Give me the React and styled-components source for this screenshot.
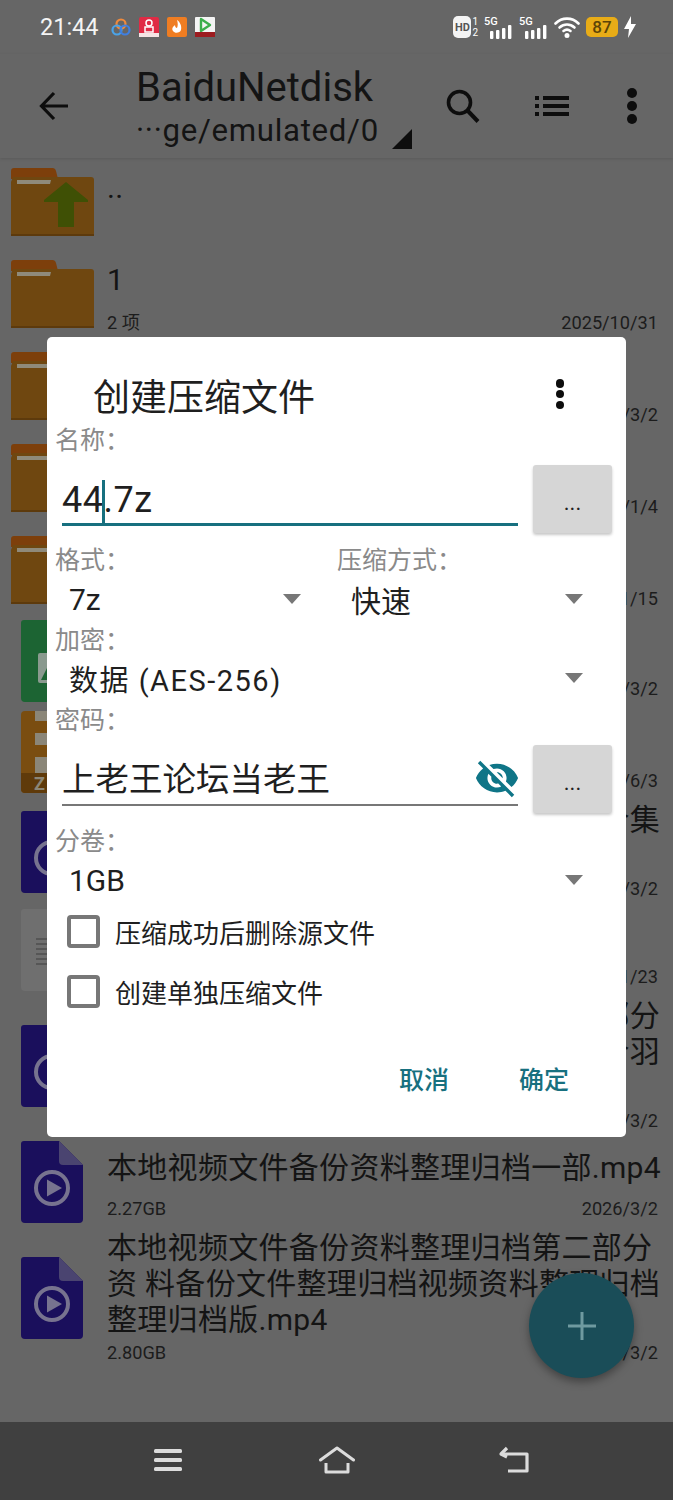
import React from 'react';
import styled, { createGlobalStyle } from 'styled-components';

const FONT = `Roboto, "Noto Sans CJK SC", "Noto Sans", sans-serif`;

const GlobalStyle = createGlobalStyle`
  html, body { margin: 0; padding: 0; background: #666; }
  body { font-family: ${FONT}; }
`;

const FolderIcon = ({ up }) => (
  <svg width="83" height="68" viewBox="0 0 83 68">
    <path d="M0 3a3 3 0 0 1 3-3h38a4 4 0 0 1 4 3l2 8H0z" fill="#7d3f0b" />
    <path d="M0 14 L2 9 H80 a3 3 0 0 1 3 3 V65 a3 3 0 0 1-3 3H0z" fill="#6f4710" />
    <path d="M6 12h34l-1 4H6z" fill="#8f8a7a" />
    <rect x="0" y="66" width="83" height="2" fill="#5d3a0c" />
    {up && <path d="M55 14 L77 32 V34 H63 V59 H47 V34 H33 V32z" fill="#3f5005" />}
  </svg>
);

const FileShape = ({ color, fold, children }) => (
  <svg width="62" height="82" viewBox="0 0 62 82">
    <path d="M3 0H38L62 24V78a4 4 0 0 1-4 4H4a4 4 0 0 1-4-4V3a3 3 0 0 1 3-3z" fill={color} />
    <path d="M38 0L62 24H42a4 4 0 0 1-4-4z" fill={fold} />
    {children}
  </svg>
);

const VideoIcon = () => (
  <FileShape color="#1a0f5c" fold="#4a4470">
    <circle cx="31" cy="47" r="16" fill="none" stroke="#77738f" strokeWidth="4" />
    <path d="M26 38.5L41 47L26 55.5z" fill="#77738f" />
  </FileShape>
);

const ImageIcon = () => (
  <FileShape color="#1c6433" fold="#3f7d54">
    <rect x="17" y="33" width="30" height="30" rx="2" fill="#8a9a8f" />
    <path d="M20 60L30 40L42 60z" fill="#1c6433" />
  </FileShape>
);

const ZipIcon = () => (
  <svg width="62" height="82" viewBox="0 0 62 82">
    <rect width="62" height="82" rx="4" fill="#7a4d10" />
    <path d="M0 62H62V78a4 4 0 0 1-4 4H4a4 4 0 0 1-4-4z" fill="#5f3a0a" />
    <path d="M14 0h12v10H14zM26 10h12v12H26zM14 22h12v12H14zM26 34h12v12H26zM14 46h24v16H14z" fill="#8b8678" />
    <text x="13" y="79" fontSize="18" fontWeight="700" fill="#8b8678" fontFamily="Roboto, sans-serif">Z</text>
  </svg>
);

const DocIcon = () => (
  <FileShape color="#6f6f6f" fold="#7d7d7d">
    <path d="M15 30h32M15 35h32M15 40h32M15 45h32M15 50h32M15 55h32" stroke="#565656" strokeWidth="2" />
  </FileShape>
);

const RingsLogo = () => (
  <svg width="20" height="20" viewBox="0 0 20 20" fill="none" strokeWidth="2.2">
    <circle cx="10" cy="7" r="4.5" stroke="#f08a3c" />
    <circle cx="6" cy="13" r="4.5" stroke="#4aa3e8" />
    <circle cx="14" cy="13" r="4.5" stroke="#3f7fe0" />
  </svg>
);

const RedLogo = () => (
  <svg width="20" height="20" viewBox="0 0 20 20">
    <rect width="20" height="20" rx="2" fill="#e02b45" />
    <circle cx="10" cy="6" r="3" fill="none" stroke="#fff" strokeWidth="1.5" />
    <rect x="6" y="10" width="8" height="5" fill="none" stroke="#fff" strokeWidth="1.5" />
    <rect y="16" width="20" height="4" fill="#f5e5e5" />
  </svg>
);

const OrangeLogo = () => (
  <svg width="20" height="20" viewBox="0 0 20 20">
    <rect width="20" height="20" rx="2" fill="#ef7d22" />
    <path d="M10 3c3 2 5 6 4 10-1 3-6 4-8 1-2-3 1-5 2-6 0 2 1 3 2 3 1-2 1-5 0-8z" fill="#fff" />
  </svg>
);

const PlayLogo = () => (
  <svg width="20" height="20" viewBox="0 0 20 20">
    <rect width="20" height="20" rx="1" fill="#f4f4f4" />
    <path d="M6 2L15 8L6 14z" fill="none" stroke="#3cae4c" strokeWidth="2.4" strokeLinejoin="round" />
    <rect y="15" width="20" height="5" fill="#9c1c20" />
  </svg>
);

const SignalIcon = () => (
  <svg width="29" height="24" viewBox="0 0 29 24">
    <rect x="6" y="16" width="3.4" height="8" rx="1" fill="#fff" />
    <rect x="12" y="15" width="3.4" height="9" rx="1" fill="#fff" />
    <rect x="18" y="13" width="3.4" height="11" rx="1" fill="#fff" />
    <rect x="24" y="10" width="3.4" height="14" rx="1" fill="#fff" />
    <text x="0" y="10" fontSize="11" fontWeight="500" fill="#fff" fontFamily="Roboto, sans-serif">5G</text>
  </svg>
);

const WifiIcon = () => (
  <svg width="26" height="22" viewBox="0 0 26 22" fill="none" stroke="#fff" strokeWidth="2.6" strokeLinecap="round">
    <path d="M1.5 7.5C8 1 18 1 24.5 7.5" />
    <path d="M5.5 11.5C10 7.5 16 7.5 20.5 11.5" />
    <path d="M9.5 15C11.5 13.5 14.5 13.5 16.500 15" />
    <circle cx="13" cy="19.500" r="1.2" fill="#fff" />
  </svg>
);

const BoltIcon = () => (
  <svg width="12" height="22" viewBox="0 0 12 22">
    <path d="M7 0L0 13H5L4 22L12 8H7z" fill="#fff" />
  </svg>
);

const BackArrow = () => (
  <svg width="32" height="32" viewBox="0 0 32 32" fill="none" stroke="#0d0d0d" strokeWidth="3.2">
    <path d="M30 16H4M16 3L3.500 16L16 29" />
  </svg>
);

const SearchIcon = () => (
  <svg width="34" height="34" viewBox="0 0 34 34" fill="none" stroke="#0d0d0d">
    <circle cx="13.500" cy="13.500" r="11" strokeWidth="3.6" />
    <path d="M21 21L32 32.500" strokeWidth="4" />
  </svg>
);

const ListIcon = () => (
  <svg width="34" height="20" viewBox="0 0 34 20" fill="#0d0d0d">
    <rect width="4" height="4" y="0" />
    <rect width="4" height="4" y="8" />
    <rect width="4" height="4" y="16" />
    <rect x="8" y="0" width="26" height="4" />
    <rect x="8" y="8" width="26" height="4" />
    <rect x="8" y="16" width="26" height="4" />
  </svg>
);

const EyeOff = () => (
  <svg width="46" height="46" viewBox="0 0 24 24" fill="#0f7587">
    <path d="M12 7c2.760 0 5 2.240 5 5 0 .65-.13 1.260-.36 1.830l2.920 2.920c1.510-1.260 2.700-2.890 3.430-4.750-1.730-4.390-6-7.500-11-7.500-1.400 0-2.740.25-3.980.7l2.160 2.160C10.740 7.130 11.350 7 12 7zM2 4.270l2.280 2.280.46.46C3.080 8.300 1.780 10.020 1 12c1.730 4.390 6 7.500 11 7.500 1.550 0 3.030-.3 4.380-.84l.42.42L19.730 22 21 20.730 3.270 3 2 4.270zM7.530 9.800l1.550 1.550c-.05.21-.08.43-.08.65 0 1.660 1.340 3 3 3 .22 0 .44-.03.65-.08l1.550 1.550c-.67.33-1.410.53-2.200.53-2.760 0-5-2.240-5-5 0-.79.2-1.530.53-2.200zm4.310-.78l3.150 3.150.02-.16c0-1.660-1.340-3-3-3l-.17.01z" />
  </svg>
);

const MenuGlyph = () => (
  <svg width="36" height="26" viewBox="0 0 36 26" fill="#dcdcdc">
    <rect x="4" y="2" width="28" height="4" rx="1.500" />
    <rect x="4" y="11" width="28" height="4" rx="1.500" />
    <rect x="4" y="20" width="28" height="4" rx="1.500" />
  </svg>
);

const HomeGlyph = () => (
  <svg width="36" height="28" viewBox="0 0 36 28" fill="none" stroke="#dcdcdc" strokeWidth="3">
    <path d="M1.500 14L18 2L34.500 14" strokeLinecap="round" strokeLinejoin="round" />
    <path d="M7 17V26H29V17" strokeLinejoin="round" />
  </svg>
);

const BackGlyph = () => (
  <svg width="36" height="28" viewBox="0 0 36 28" fill="none" stroke="#dcdcdc" strokeWidth="3.200">
    <path d="M6 8H31V25H12" strokeLinejoin="round" />
    <path d="M11 2L5 8L11 11" strokeLinejoin="round" />
  </svg>
);

const Phone = styled.div`
  position: relative;
  width: 673px;
  height: 1500px;
  overflow: hidden;
  background: #666;
  display: flex;
  flex-direction: column;
  color: #111;
  font-family: ${FONT};
`;

const StatusBar = styled.div`
  height: 54px;
  padding: 0 37px 0 40px;
  display: flex;
  align-items: center;
  flex-shrink: 0;
`;

const Clock = styled.span`
  color: #f4f4f4;
  font-size: 23.500px;
  margin-right: 12px;
`;

const AppTray = styled.div`
  display: flex;
  gap: 8px;
  flex: 1;
`;

const SysTray = styled.div`
  display: flex;
  align-items: center;
  gap: 6px;
`;

const HdBadge = styled.span`
  display: inline-flex;
  align-items: center;
  justify-content: center;
  width: 18px;
  height: 22px;
  border-radius: 5px;
  background: #f4f4f4;
  color: #555;
  font-size: 11px;
  font-weight: 700;
`;

const HdSlots = styled.span`
  display: flex;
  flex-direction: column;
  margin-left: -5px;
  color: #fff;
  font-size: 10px;
  line-height: 11px;
`;

const Battery = styled.span`
  width: 32px;
  height: 20px;
  border-radius: 5px;
  background: #e8ac17;
  color: #5d4408;
  font-size: 17px;
  font-weight: 500;
  line-height: 20px;
  text-align: center;
`;

const Toolbar = styled.header`
  height: 104px;
  box-sizing: border-box;
  padding-left: 38px;
  display: flex;
  align-items: center;
  box-shadow: 0 1px 3px rgba(0, 0, 0, 0.12);
  flex-shrink: 0;
`;

const TitleBlock = styled.div`
  position: relative;
  width: 311px;
  margin-left: 66px;
  margin-top: 3px;
`;

const Title = styled.div`
  font-size: 40px;
  line-height: 46px;
  color: #141414;
`;

const Subtitle = styled.div`
  font-size: 31.200px;
  letter-spacing: 0.7px;
  line-height: 40px;
  color: #141414;
`;

const Corner = styled.span`
  position: absolute;
  right: 35px;
  bottom: 2px;
  width: 0;
  height: 0;
  border-left: 20px solid transparent;
  border-bottom: 20px solid #0d0d0d;
`;

const ToolIcon = styled.span`
  display: flex;
  align-items: center;
  justify-content: center;
  width: ${(p) => p.$w}px;
  margin-left: ${(p) => p.$gap}px;
`;

const Dots = styled.span`
  display: flex;
  flex-direction: column;
  align-items: center;
  gap: ${(p) => p.$gap}px;
  & > i {
    width: ${(p) => p.$size}px;
    height: ${(p) => p.$size}px;
    border-radius: 50%;
    background: #0d0d0d;
  }
`;

const List = styled.div`
  flex: 1;
  margin-top: -2px;
`;

const Row = styled.div`
  height: ${(p) => p.$h}px;
  display: flex;
  align-items: center;
  box-sizing: border-box;
  padding-right: 15px;
`;

const IconCell = styled.div`
  width: 107px;
  flex-shrink: 0;
  display: flex;
  padding-left: ${(p) => (p.$folder ? 11 : 21)}px;
  box-sizing: border-box;
`;

const RowBody = styled.div`
  flex: 1;
  height: 100%;
  min-width: 0;
  display: flex;
  flex-direction: column;
`;

const Name = styled.div`
  flex: 1;
  display: flex;
  align-items: center;
  padding-top: 4px;
  box-sizing: border-box;
  white-space: pre;
  font-size: 30px;
  letter-spacing: 0.3px;
  line-height: 36px;
  color: #141414;
`;

const Meta = styled.div`
  display: flex;
  justify-content: space-between;
  height: 32px;
  font-size: 18.200px;
  line-height: 29px;
  color: #1c1c1c;
`;

const NavBar = styled.nav`
  height: 78px;
  background: #404040;
  display: flex;
  align-items: center;
  padding-bottom: 2px;
  box-sizing: border-box;
  flex-shrink: 0;
`;

const NavSlot = styled.span`
  display: flex;
  margin-left: ${(p) => p.$left}px;
`;

const Fab = styled.div`
  position: absolute;
  left: 529px;
  top: 1273px;
  width: 105px;
  height: 105px;
  border-radius: 50%;
  background: #1a4d58;
  box-shadow: 0 4px 8px rgba(0, 0, 0, 0.35);
  display: flex;
  align-items: center;
  justify-content: center;
`;

const Dialog = styled.div`
  position: absolute;
  left: 47px;
  top: 337px;
  width: 579px;
  height: 800px;
  box-sizing: border-box;
  padding: 0 14px 0 8px;
  border-radius: 5px;
  background: #fff;
  display: flex;
  flex-direction: column;
  color: #1f1f1f;
`;

const DialogHead = styled.div`
  height: 85px;
  padding: 42px 48px 0 38px;
  box-sizing: border-box;
  display: flex;
  justify-content: space-between;
`;

const DialogTitle = styled.h2`
  margin: 2px 0 0;
  font-size: 37px;
  font-weight: 400;
  line-height: 36px;
`;

const Label = styled.div`
  height: 34px;
  line-height: 38px;
  font-size: 25px;
  color: #8a8a8a;
  margin-top: ${(p) => p.$top || 0}px;
`;

const InputRow = styled.div`
  height: 84px;
  display: flex;
  align-items: flex-start;
  padding-top: 9px;
  box-sizing: border-box;
`;

const TextField = styled.div`
  position: relative;
  width: 456px;
  height: 61px;
  margin-left: 7px;
  padding-top: ${(p) => p.$pad}px;
  box-sizing: border-box;
  border-bottom: ${(p) => (p.$active ? '3px solid #17707f' : '2px solid #777')};
  display: flex;
  align-items: center;
  justify-content: space-between;
  font-size: ${(p) => p.$size}px;
  letter-spacing: ${(p) => (p.$active ? '0.5px' : '0')};
  line-height: 40px;
`;

const Caret = styled.span`
  display: inline-block;
  width: 3px;
  height: 44px;
  margin: 0 -1.500px;
  vertical-align: middle;
  background: #17707f;
  position: relative;
`;

const EyeSlot = styled.span`
  display: flex;
  margin-right: -2px;
  margin-top: -4px;
`;

const MoreButton = styled.button`
  width: 79px;
  height: 68px;
  margin-left: 15px;
  border: 0;
  padding: 6px 0 0;
  border-radius: 3px;
  background: #d6d6d6;
  box-shadow: 0 2px 3px rgba(0, 0, 0, 0.22);
  color: #222;
  font-family: ${FONT};
  font-size: 22px;
`;

const TwoCols = styled.div`
  display: grid;
  grid-template-columns: 275px 275px;
  column-gap: 7px;
`;

const Spinner = styled.div`
  height: ${(p) => p.$h || 40}px;
  margin-top: ${(p) => p.$top || 0}px;
  display: flex;
  align-items: center;
  justify-content: space-between;
  padding: 0 29px 0 14px;
  font-size: ${(p) => p.$size || 29}px;
  letter-spacing: ${(p) => p.$track || 0}px;
`;

const Arrow = styled.span`
  width: 0;
  height: 0;
  border-left: 9px solid transparent;
  border-right: 9px solid transparent;
  border-top: 10px solid #777;
`;

const CheckRow = styled.label`
  height: 60px;
  margin-top: ${(p) => p.$top || 0}px;
  display: flex;
  align-items: center;
  gap: 15px;
  padding-left: 12px;
  font-size: 26px;
`;

const CheckBox = styled.span`
  width: 33px;
  height: 33px;
  box-sizing: border-box;
  border: 4px solid #777;
  border-radius: 4px;
`;

const Actions = styled.div`
  display: flex;
  justify-content: flex-end;
  gap: 70px;
  padding: 40px 43px 0 0;
`;

const ActionButton = styled.span`
  color: #17707f;
  font-size: 25px;
  font-weight: 500;
  line-height: 40px;
`;

const rows = [
  { h: 92, icon: <FolderIcon up />, folder: true, name: '..' },
  { h: 92, icon: <FolderIcon />, folder: true, name: '1', left: '2 项', right: '2025/10/31' },
  { h: 92, icon: <FolderIcon />, folder: true, name: '', right: '2026/3/2' },
  { h: 92, icon: <FolderIcon />, folder: true, name: '', right: '2026/1/4' },
  { h: 92, icon: <FolderIcon />, folder: true, name: '', right: '2025/11/15' },
  { h: 90, icon: <ImageIcon />, name: '', right: '2026/3/2' },
  { h: 92, icon: <ZipIcon />, name: '', right: '2025/6/3' },
  { h: 108, icon: <VideoIcon />, name: '本地视频文件\u00a0备份资料整理归档视频合集\n资料.mp4', right: '2026/3/2' },
  { h: 88, icon: <DocIcon />, name: '', right: '2025/11/23' },
  { h: 144, icon: <VideoIcon />, name: '本地视频文件\u00a0备份资料整理归档视频部分\n本地视频文件\u00a0备份资料整理归档视频合羽\n资料.mp4', right: '2026/3/2' },
  { h: 88, icon: <VideoIcon />, name: '本地视频文件备份资料整理归档一部.mp4', left: '2.27GB', right: '2026/3/2' },
  { h: 144, icon: <VideoIcon />, name: '本地视频文件备份资料整理归档第二部分\n资 料备份文件整理归档视频资料整理归档\n整理归档版.mp4', left: '2.80GB', right: '2026/3/2' },
];

const Spinners = { format: '7z', method: '快速', crypt: '数据 (AES-256)', volume: '1GB' };

const App = () => {
  return (
    <Phone>
      <GlobalStyle />
      <StatusBar>
        <Clock>21:44</Clock>
        <AppTray>
          <RingsLogo />
          <RedLogo />
          <OrangeLogo />
          <PlayLogo />
        </AppTray>
        <SysTray>
          <HdBadge>HD</HdBadge>
          <HdSlots><span>1</span><span>2</span></HdSlots>
          <SignalIcon />
          <SignalIcon />
          <WifiIcon />
          <Battery>87</Battery>
          <BoltIcon />
        </SysTray>
      </StatusBar>

      <Toolbar>
        <BackArrow />
        <TitleBlock>
          <Title>BaiduNetdisk</Title>
          <Subtitle>···ge/emulated/0</Subtitle>
          <Corner />
        </TitleBlock>
        <ToolIcon $w={34} $gap={-1}><SearchIcon /></ToolIcon>
        <ToolIcon $w={34} $gap={55}><ListIcon /></ToolIcon>
        <ToolIcon $w={12} $gap={57}>
          <Dots $size={10} $gap={3}><i /><i /><i /></Dots>
        </ToolIcon>
      </Toolbar>

      <List>
        {rows.map((row, i) => (
          <Row key={i} $h={row.h}>
            <IconCell $folder={row.folder}>{row.icon}</IconCell>
            <RowBody>
              <Name><span>{row.name}</span></Name>
              <Meta>
                <span>{row.left}</span>
                <span>{row.right}</span>
              </Meta>
            </RowBody>
          </Row>
        ))}
      </List>

      <NavBar>
        <NavSlot $left={150}><MenuGlyph /></NavSlot>
        <NavSlot $left={133}><HomeGlyph /></NavSlot>
        <NavSlot $left={141}><BackGlyph /></NavSlot>
      </NavBar>

      <Fab>
        <svg width="28" height="28" viewBox="0 0 28 28" fill="#6f9aa0">
          <rect x="12.500" width="3" height="28" />
          <rect y="12.500" width="28" height="3" />
        </svg>
      </Fab>

      <Dialog>
        <DialogHead>
          <DialogTitle>创建压缩文件</DialogTitle>
          <Dots $size={8.500} $gap={2.250}><i /><i /><i /></Dots>
        </DialogHead>
        <Label>名称：</Label>
        <InputRow>
          <TextField $active $size={36} $pad={16}>
            <span>44<Caret />.7z</span>
          </TextField>
          <MoreButton>...</MoreButton>
        </InputRow>
        <TwoCols>
          <div>
            <Label $top={2}>格式：</Label>
            <Spinner $top={3} $size={30}>{Spinners.format}<Arrow /></Spinner>
          </div>
          <div>
            <Label $top={2}>压缩方式：</Label>
            <Spinner $top={3} $size={30}>{Spinners.method}<Arrow /></Spinner>
          </div>
        </TwoCols>
        <Label $top={3}>加密：</Label>
        <Spinner $top={2} $track={1.500}>{Spinners.crypt}<Arrow /></Spinner>
        <Label $top={4}>密码：</Label>
        <InputRow>
          <TextField $size={33.500} $pad={10}>
            <span>上老王论坛当老王</span>
            <EyeSlot><EyeOff /></EyeSlot>
          </TextField>
          <MoreButton>...</MoreButton>
        </InputRow>
        <Label $top={3}>分卷：</Label>
        <Spinner $top={3} $size={30}>{Spinners.volume}<Arrow /></Spinner>
        <CheckRow $top={1}><CheckBox />压缩成功后删除源文件</CheckRow>
        <CheckRow><CheckBox />创建单独压缩文件</CheckRow>
        <Actions>
          <ActionButton>取消</ActionButton>
          <ActionButton>确定</ActionButton>
        </Actions>
      </Dialog>
    </Phone>
  );
};

export default App;
